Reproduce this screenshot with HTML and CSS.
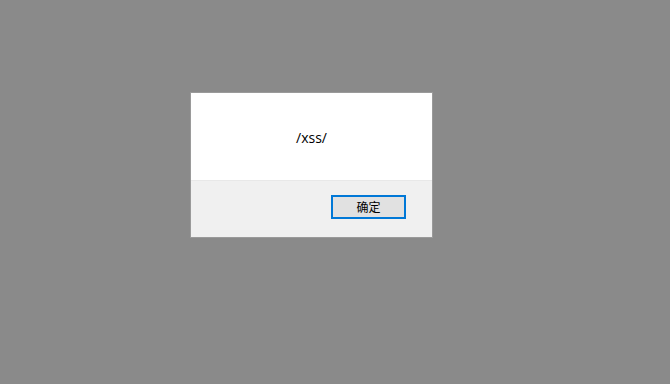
FILE: index.html
```html
<!DOCTYPE html>
<html>
<head>
<meta charset="utf-8">
<link rel="stylesheet" href="styles.css">
</head>
<body>
<div class="dialog">
  <div class="message">/xss/</div>
  <div class="footer">
    <button class="ok">确定</button>
  </div>
</div>
</body>
</html>
```
FILE: styles.css
```css
html, body {
  margin: 0;
  padding: 0;
  background: #8a8a8a;
  height: 100%;
}
body {
  padding: 92px 0 0 190px;
  box-sizing: border-box;
  font-family: "Open Sans", "Noto Sans CJK SC", sans-serif;
}
.dialog {
  width: 243px;
  height: 146px;
  box-sizing: border-box;
  border: 1px solid #9a9a9a;
  background: #ffffff;
  display: flex;
  flex-direction: column;
}
.message {
  height: 87px;
  display: flex;
  align-items: center;
  justify-content: center;
  font-size: 14px;
  color: #000;
  padding-top: 2px;
  box-sizing: border-box;
}
.footer {
  flex: 1;
  background: #f0f0f0;
  border-top: 1px solid #e8e8e8;
  display: flex;
  justify-content: flex-end;
  align-items: flex-start;
  padding: 14px 26px 0 0;
}
.ok {
  width: 75px;
  height: 24px;
  box-sizing: border-box;
  border: 2px solid #0078d7;
  background: #e1e1e1;
  font-family: "Noto Sans CJK SC", sans-serif;
  font-size: 12px;
  color: #000;
  padding: 0;
  margin: 0;
  line-height: 18px;
}
```
